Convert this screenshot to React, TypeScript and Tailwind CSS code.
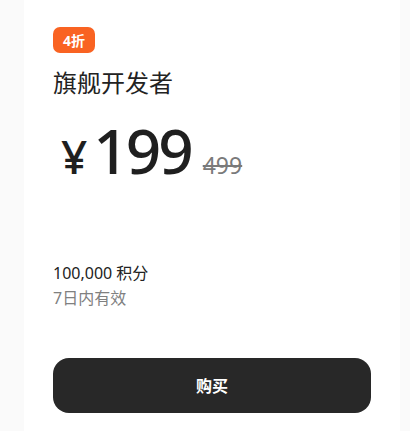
export default function App() {
  return (
    <div
      className="min-h-[431px] w-full bg-[#fafafa] pl-[24px] pr-[10px]"
      style={{ fontFamily: '"Noto Sans", "Noto Sans CJK SC", sans-serif' }}
    >
      <div className="flex h-[431px] flex-col bg-white px-[29px] pt-[27px]">
        {/* discount badge */}
        <span className="flex h-[26px] w-[42px] items-center justify-center rounded-[7px] bg-[#f96322] text-[14px] font-bold text-white">
          4折
        </span>
        <h2 className="mt-[14px] text-[24px] leading-[32px] text-[#222222]">
          旗舰开发者
        </h2>
        <div className="mt-[16px] flex items-baseline text-[#1f1f1f]">
          <span className="ml-[8px] text-[46px] font-medium leading-none">¥</span>
          <span className="ml-[6px] text-[62px] font-medium leading-[70px] tracking-[-3px]">
            199
          </span>
          <span className="ml-[12px] text-[23px] text-[#7a7a7a] line-through">
            499
          </span>
        </div>
        <div className="mt-[76px] text-[16px] leading-[24px] text-[#222222]">
          100,000 积分
        </div>
        <div className="mt-[3px] text-[16px] leading-[20px] text-[#808080]">
          7日内有效
        </div>
        <button className="mt-[50px] flex h-[55px] w-full items-center justify-center rounded-[16px] bg-[#282828] text-[16px] font-bold text-white">
          购买
        </button>
      </div>
    </div>
  );
}
